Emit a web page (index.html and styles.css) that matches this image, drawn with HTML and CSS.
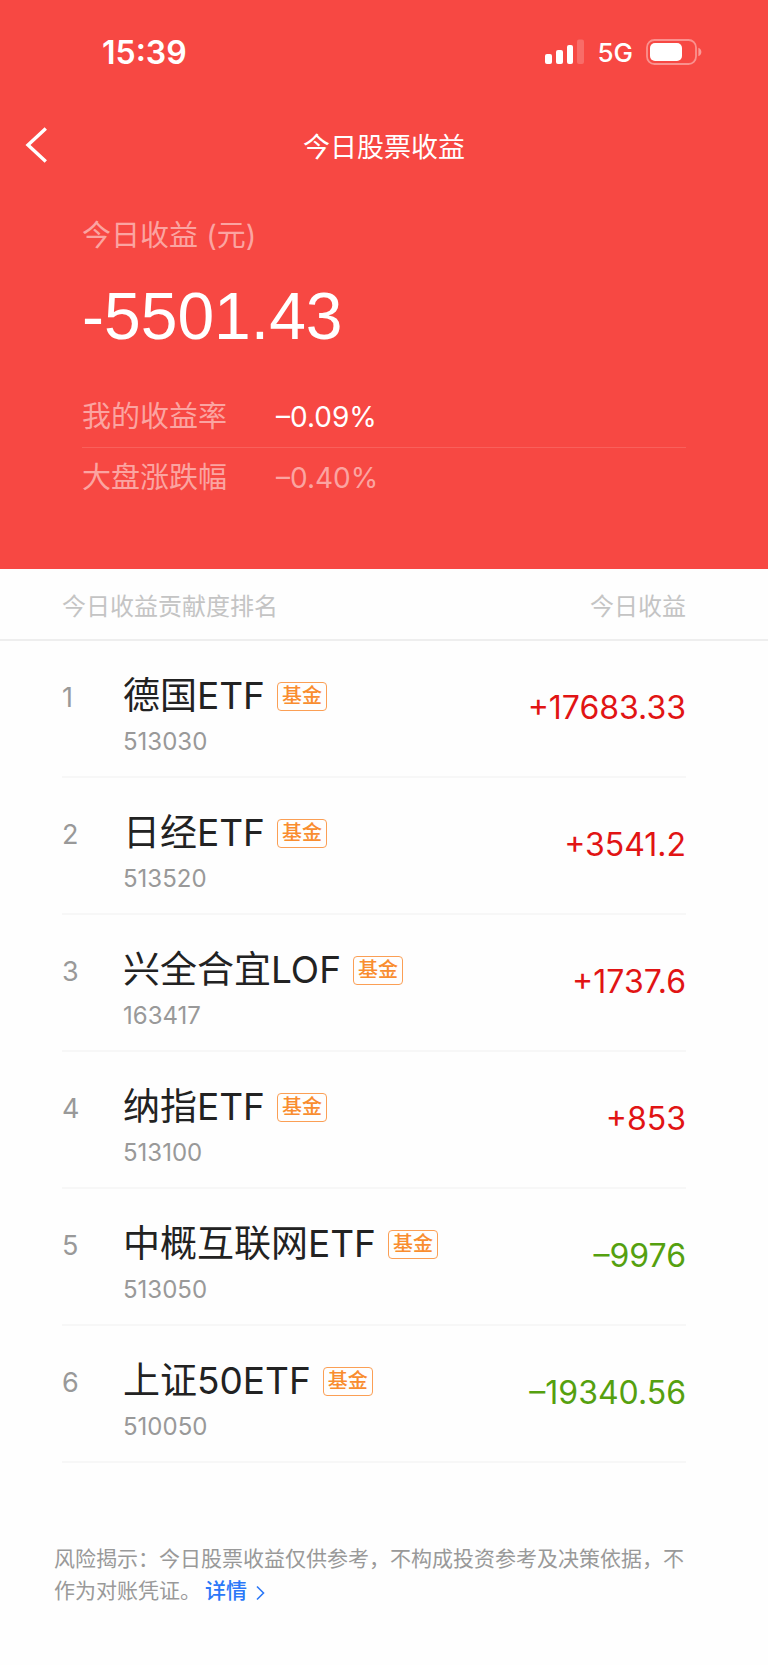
FILE: index.html
```
<!DOCTYPE html>
<html lang="zh-CN">
<head>
  <meta charset="UTF-8">
  <meta name="viewport" content="width=device-width, initial-scale=1.0">
  <title>今日股票收益</title>
  <link rel="stylesheet" href="styles.css">
</head>
<body>
  <header class="hero">
    <div class="status">
      <span class="time">15:39</span>
      <div class="status-right">
        <svg width="39" height="26" viewBox="0 0 39 26" fill="#fff">
          <rect x="0" y="15" width="7" height="10" rx="2"/>
          <rect x="11" y="11" width="7" height="14" rx="2"/>
          <rect x="22" y="6" width="6" height="19" rx="2"/>
          <rect x="32" y="0.5" width="7" height="24.5" rx="2" opacity="0.2"/>
        </svg>
        <span class="network">5G</span>
        <svg width="56" height="26" viewBox="0 0 56 26">
          <rect x="1" y="1" width="49" height="24" rx="7.5" fill="none" stroke="#fff" stroke-width="1.8" opacity="0.4"/>
          <rect x="4" y="4" width="32" height="18" rx="5" fill="#fff"/>
          <path d="M52.4 8.8c4 1.4 4 7 0 8.400z" fill="#fff" opacity="0.45"/>
        </svg>
      </div>
    </div>

    <nav class="nav">
      <a href="#" class="back" aria-label="返回">
        <svg width="22" height="36" viewBox="0 0 22 36" fill="none" stroke="#fff" stroke-width="3.400">
          <path d="M20.800 1.500L3 18l17.800 16.500"/>
        </svg>
      </a>
      <h1>今日股票收益</h1>
    </nav>

    <div class="summary">
      <p class="label">今日收益 (元)</p>
      <p class="total">-5501.43</p>
      <div class="rate">
        <span class="label">我的收益率</span>
        <span class="percent">–0.09%</span>
      </div>
      <div class="rate">
        <span class="label">大盘涨跌幅</span>
        <span class="percent muted">–0.40%</span>
      </div>
    </div>
  </header>

  <main>
    <div class="list-head">
      <h2>今日收益贡献度排名</h2>
      <span>今日收益</span>
    </div>
    <ol class="list">
      <li>
        <span class="rank">1</span>
        <div class="stock">
          <div class="name">德国ETF <span class="tag">基金</span></div>
          <div class="code">513030</div>
        </div>
        <span class="value up">+17683.33</span>
      </li>
      <li>
        <span class="rank">2</span>
        <div class="stock">
          <div class="name">日经ETF <span class="tag">基金</span></div>
          <div class="code">513520</div>
        </div>
        <span class="value up">+3541.2</span>
      </li>
      <li>
        <span class="rank">3</span>
        <div class="stock">
          <div class="name">兴全合宜LOF <span class="tag">基金</span></div>
          <div class="code">163417</div>
        </div>
        <span class="value up">+1737.6</span>
      </li>
      <li>
        <span class="rank">4</span>
        <div class="stock">
          <div class="name">纳指ETF <span class="tag">基金</span></div>
          <div class="code">513100</div>
        </div>
        <span class="value up">+853</span>
      </li>
      <li>
        <span class="rank">5</span>
        <div class="stock">
          <div class="name">中概互联网ETF <span class="tag">基金</span></div>
          <div class="code">513050</div>
        </div>
        <span class="value down">–9976</span>
      </li>
      <li>
        <span class="rank">6</span>
        <div class="stock">
          <div class="name">上证50ETF <span class="tag">基金</span></div>
          <div class="code">510050</div>
        </div>
        <span class="value down">–19340.56</span>
      </li>
    </ol>
  </main>

  <footer class="footer">
    <p>风险揭示：今日股票收益仅供参考，不构成投资参考及决策依据，不作为对账凭证。<a href="#">详情<svg width="9" height="16" viewBox="0 0 9 16" fill="none" stroke="currentColor" stroke-width="1.600"><path d="M1 1.500L7.500 8 1 14.500"/></svg></a></p>
  </footer>
</body>
</html>
```
FILE: styles.css
```
* {
  box-sizing: border-box;
  margin: 0;
  padding: 0;
}
body {
  font-family: Inter, "Noto Sans CJK SC", sans-serif;
  background-color: #fefefe;
  color: #222;
}
a {
  color: inherit;
  text-decoration: none;
}
svg {
  display: block;
}

/* red header */
.hero {
  background-color: #f74843;
  color: white;
  padding-bottom: 61px;
}
.status {
  display: flex;
  justify-content: space-between;
  align-items: center;
  height: 104px;
  padding: 0 66px 0 102px;
}
.time {
  font-size: 32px;
  font-weight: 600;
}
.status-right {
  display: flex;
  align-items: center;
  gap: 13px;
}
.network {
  font-size: 26px;
  font-weight: 500;
}
.nav {
  display: grid;
  grid-template-columns: 80px 1fr 80px;
  align-items: center;
  height: 82px;
}
.back {
  padding-left: 25px;
}
.nav h1 {
  font-size: 27px;
  font-weight: 400;
  text-align: center;
}
.summary {
  padding: 28px 82px 0;
}
.label {
  font-size: 29px;
  line-height: 44px;
  color: #fba4a1;
}
.total {
  font-family: "Liberation Sans", Arial, sans-serif;
  font-size: 66px;
  line-height: 76px;
  margin: 20px 0 32px;
}
.rate {
  display: flex;
  align-items: center;
  height: 61px;
}
.rate + .rate {
  border-top: 1px solid #f9605b;
}
.rate .label {
  width: 194px;
}
.percent {
  font-size: 28px;
}
.muted {
  color: #fba4a1;
}

/* ranking */
.list-head {
  display: flex;
  justify-content: space-between;
  align-items: center;
  height: 72px;
  padding: 0 82px 0 62px;
  border-bottom: 2px solid #eee;
  font-size: 24px;
  color: #c4c4c4;
}
.list-head h2 {
  font-size: 24px;
  font-weight: 400;
}
.list {
  list-style: none;
  padding: 0 82px 0 62px;
}
.list li {
  display: flex;
  height: 137px;
  padding-top: 32px;
  border-bottom: 2px solid #f7f7f7;
}
.rank {
  width: 61px;
  font-size: 27px;
  line-height: 50px;
  color: #999;
}
.stock {
  flex: 1;
}
.name {
  display: flex;
  align-items: center;
  gap: 12px;
  font-size: 37px;
  line-height: 46px;
}
.tag {
  padding: 0 4px;
  border: 1px solid #fb9f55;
  border-radius: 4px;
  font-size: 20px;
  font-weight: 500;
  line-height: 27px;
  color: #f98d2f;
}
.code {
  font-size: 24px;
  line-height: 46px;
  color: #999;
}
.value {
  font-size: 32px;
  line-height: 70px;
}
.up {
  color: #e11414;
}
.down {
  color: #55a00f;
}

.footer {
  padding: 80px 70px 48px 54px;
  font-size: 21px;
  line-height: 32px;
  color: #999;
}
.footer a {
  margin-left: 4px;
  color: #2b78f8;
  font-weight: 500;
}
.footer svg {
  display: inline-block;
  margin-left: 9px;
  vertical-align: -3px;
}
```
